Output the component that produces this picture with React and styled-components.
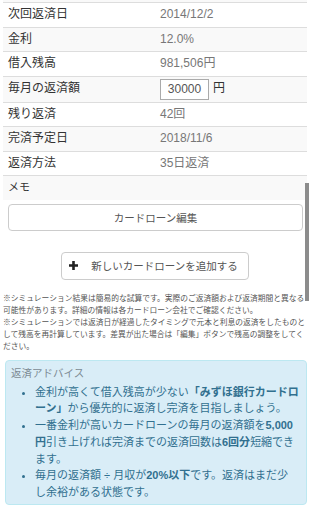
import React from 'react';
import styled, { createGlobalStyle } from 'styled-components';

const GlobalStyle = createGlobalStyle`
  html, body {
    margin: 0;
    padding: 0;
    background: #fff;
  }

  body {
    font-family: "Liberation Sans", "Noto Sans CJK JP", sans-serif;
    color: #333;
  }
`;

const StyledPage = styled.div`
  position: relative;
  box-sizing: border-box;
  width: 312px;
  height: 512px;
  overflow: hidden;
  padding: 0 5px 0 3px;
`;

const StyledTableTail = styled.div`
  height: 2px;
  background: #f9f9f9;
`;

const StyledRow = styled.div`
  display: grid;
  grid-template-columns: 157px 1fr;
  align-items: center;
  border-top: 1px solid #ddd;
  background: ${(props) => (props.striped ? '#f9f9f9' : '#fff')};
  padding: ${(props) => (props.tight ? '2px' : '3px')} 0;
  font-size: 12px;
  line-height: 17.5px;
`;

const StyledLabel = styled.div`
  padding-left: 5px;
  color: #333;
  font-size: ${(props) => (props.small ? '11px' : '12px')};
`;

const StyledValue = styled.div`
  display: flex;
  align-items: center;
  gap: 4px;
  color: #777;
`;

const StyledAmountInput = styled.input`
  box-sizing: border-box;
  width: 49px;
  height: 21px;
  margin: 0;
  padding: 0 2px;
  border: 1px solid #aaa;
  border-radius: 0;
  font-family: "Liberation Sans", sans-serif;
  font-size: 12px;
  color: #555;
  text-align: center;
`;

const StyledUnit = styled.span`
  color: #333;
`;

const StyledEditButton = styled.button`
  display: block;
  box-sizing: border-box;
  width: calc(100% - 9px);
  height: 27px;
  margin: 4px 4px 0 5px;
  border: 1px solid #ccc;
  border-radius: 4px;
  background: #fff;
  font-family: "Liberation Sans", "Noto Sans CJK JP", sans-serif;
  font-size: 10.5px;
  color: #555;
`;

const StyledAddWrap = styled.div`
  display: flex;
  justify-content: center;
  margin-top: 21px;
`;

const StyledAddButton = styled.button`
  display: inline-flex;
  align-items: center;
  gap: 13px;
  box-sizing: border-box;
  height: 28px;
  padding: 0 10px 0 7px;
  border: 1px solid #ccc;
  border-radius: 4px;
  background: #fff;
  font-family: "Liberation Sans", "Noto Sans CJK JP", sans-serif;
  font-size: 10.5px;
  color: #555;
`;

const StyledNotes = styled.div`
  margin-top: 12px;
  font-family: "Noto Sans CJK JP", sans-serif;
  font-size: 7.75px;
  line-height: 12px;
  color: #555;

  p {
    margin: 0;
  }
`;

const StyledAdvice = styled.div`
  box-sizing: border-box;
  margin: 8px 0 0 2px;
  padding: 4px 7px 3px 0;
  border: 1px solid #bce8f1;
  border-radius: 4px;
  background: #d9edf7;
`;

const StyledAdviceTitle = styled.div`
  padding-left: 5px;
  font-size: 10.5px;
  line-height: 17px;
  color: #7d8b94;
`;

const StyledAdviceList = styled.ul`
  margin: 2px 0 0;
  padding-left: 29px;
  font-size: 11px;
  line-height: 16.8px;
  color: #31708f;
  line-break: loose;

  strong {
    font-weight: bold;
  }
`;

const StyledScrollbar = styled.div`
  position: absolute;
  top: 183px;
  right: 3px;
  width: 4px;
  height: 118px;
  background: #8c8c8c;
`;

const PlusIcon = () => (
  <svg width="9" height="9" viewBox="0 0 9 9">
    <path d="M3.2 0h2.6v3.2H9v2.6H5.8V9H3.2V5.8H0V3.2h3.2z" fill="#222" />
  </svg>
);

const rows = [
  { label: '次回返済日', value: '2014/12/2' },
  { label: '金利', value: '12.0%' },
  { label: '借入残高', value: '981,506円' },
  { label: '毎月の返済額', input: '30000' },
  { label: '残り返済', value: '42回' },
  { label: '完済予定日', value: '2018/11/6' },
  { label: '返済方法', value: '35日返済' },
  { label: 'メモ', value: '', small: true },
];

export default function App() {
  return (
    <StyledPage lang="ja">
      <GlobalStyle />
      <StyledTableTail />
      {rows.map((row, i) => (
        <StyledRow key={row.label} striped={i % 2 === 1} tight={!!row.input}>
          <StyledLabel small={row.small}>{row.label}</StyledLabel>
          <StyledValue>
            {row.input ? (
              <>
                <StyledAmountInput defaultValue={row.input} />
                <StyledUnit>円</StyledUnit>
              </>
            ) : (
              row.value
            )}
          </StyledValue>
        </StyledRow>
      ))}

      <StyledEditButton>カードローン編集</StyledEditButton>

      <StyledAddWrap>
        <StyledAddButton>
          <PlusIcon />
          新しいカードローンを追加する
        </StyledAddButton>
      </StyledAddWrap>

      <StyledNotes>
        <p>
          ※シミュレーション結果は簡易的な試算です。実際のご返済額および返済期間と異なる可能性があります。詳細の情報は各カードローン会社でご確認ください。
        </p>
        <p>
          ※シミュレーションでは返済日が経過したタイミングで元本と利息の返済をしたものとして残高を再計算しています。差異が出た場合は「編集」ボタンで残高の調整をしてください。
        </p>
      </StyledNotes>

      <StyledAdvice>
        <StyledAdviceTitle>返済アドバイス</StyledAdviceTitle>
        <StyledAdviceList>
          <li>
            金利が高くて借入残高が少ない<strong>「みずほ銀行カードローン」</strong>から優先的に返済し完済を目指しましょう。
          </li>
          <li>
            一番金利が高いカードローンの毎月の返済額を<strong>5,000円</strong>引き上げれば完済までの返済回数は<strong>6回分</strong>短縮できます。
          </li>
          <li>
            毎月の返済額 ÷ 月収が<strong>20%以下</strong>です。返済はまだ少し余裕がある状態です。
          </li>
        </StyledAdviceList>
      </StyledAdvice>

      <StyledScrollbar />
    </StyledPage>
  );
}
